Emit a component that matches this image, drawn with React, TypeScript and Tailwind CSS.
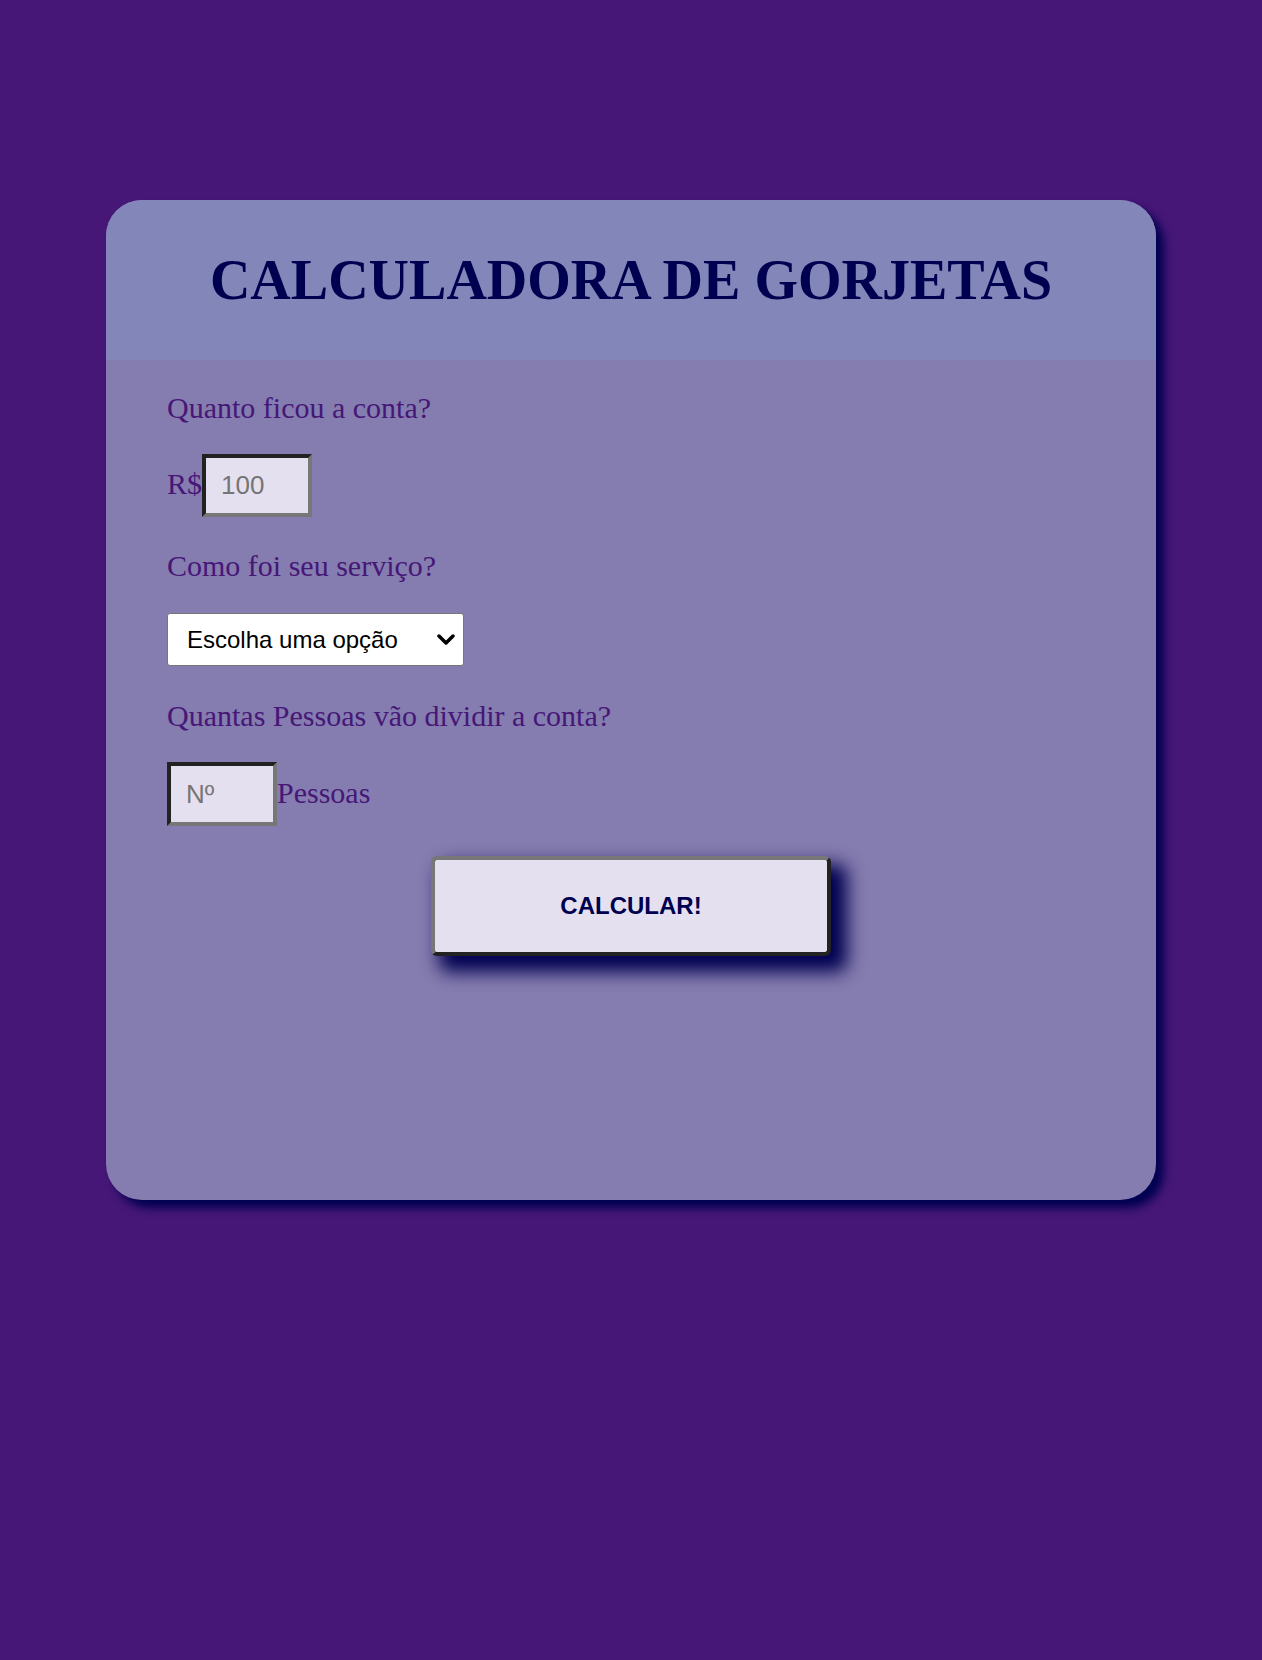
export default function App() {
  return (
    <main className="min-h-screen w-full bg-[#461777] pt-[200px] pb-[460px]">
      <div className="mx-auto h-[1000px] w-[1050px] overflow-hidden rounded-[36px] bg-[#857caf] shadow-[8px_8px_10px_#000050]">
        {/* Header */}
        <div className="flex h-[160px] items-center justify-center bg-[#8286b9]">
          <h1 className="font-['Liberation_Serif',serif] text-[56px] font-bold text-[#000050]">
            CALCULADORA DE GORJETAS
          </h1>
        </div>

        {/* Form */}
        <div className="pl-[61px] pt-[31px] font-['Liberation_Serif',serif] text-[30px] leading-[34px] text-[#461777]">
          <p>Quanto ficou a conta?</p>

          <div className="mt-[29px] flex items-baseline">
            <span>R$</span>
            <input
              type="text"
              placeholder="100"
              className="h-[63px] w-[110px] border-4 border-t-[#222] border-l-[#222] border-b-[#777] border-r-[#777] bg-[#e5e0ef] pl-[15px] font-['Liberation_Sans',sans-serif] text-[26px] placeholder:text-[#757575] outline-none"
            />
          </div>

          <p className="mt-[32px]">Como foi seu serviço?</p>

          <div className="relative mt-[30px] w-[297px]">
            <select className="h-[53px] w-[297px] appearance-none rounded-[3px] border border-[#767676] bg-white pl-[19px] font-['Liberation_Sans',sans-serif] text-[24px] text-black outline-none">
              <option>Escolha uma opção</option>
              <option>Ótimo</option>
              <option>Bom</option>
              <option>Ruim</option>
            </select>
            <svg
              className="pointer-events-none absolute right-[9px] top-[21px]"
              width="18"
              height="11"
              viewBox="0 0 18 11"
            >
              <path d="M2 2l7 7 7-7" fill="none" stroke="#000" strokeWidth="3.5" strokeLinecap="round" strokeLinejoin="round" />
            </svg>
          </div>

          <p className="mt-[33px]">Quantas Pessoas vão dividir a conta?</p>

          <div className="mt-[29px] flex items-baseline">
            <input
              type="text"
              placeholder="Nº"
              className="h-[64px] w-[110px] border-4 border-t-[#222] border-l-[#222] border-b-[#777] border-r-[#777] bg-[#e5e0ef] pl-[15px] font-['Liberation_Sans',sans-serif] text-[26px] placeholder:text-[#757575] outline-none"
            />
            <span>Pessoas</span>
          </div>
        </div>

        <div className="mt-[30px] flex justify-center">
          <button className="h-[100px] w-[400px] rounded-[6px] border-4 border-t-[#777] border-l-[#777] border-b-[#222] border-r-[#222] bg-[#e5e0ef] font-['Liberation_Sans',sans-serif] text-[24px] font-bold text-[#000050] shadow-[12px_12px_18px_4px_#000050]">
            CALCULAR!
          </button>
        </div>
      </div>
    </main>
  );
}
